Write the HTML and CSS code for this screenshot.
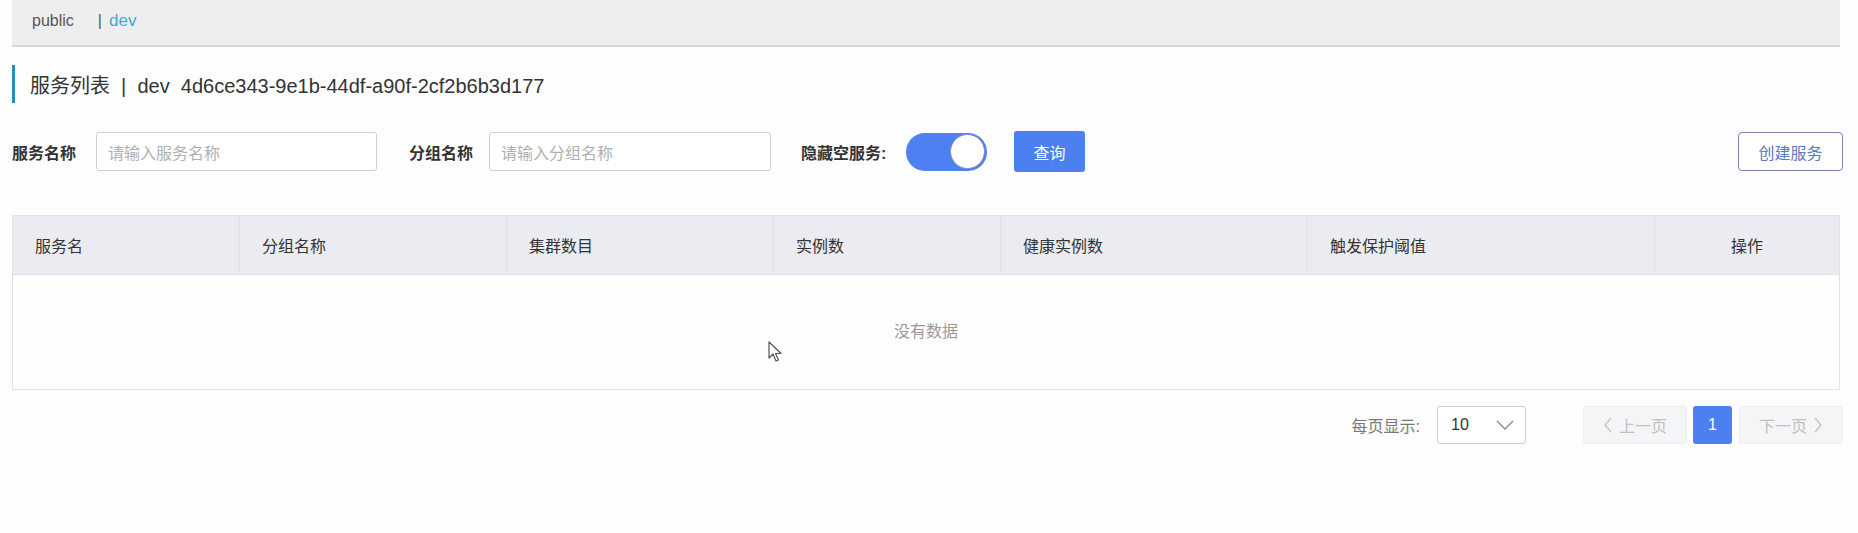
FILE: index.html
```html
<!DOCTYPE html>
<html lang="zh-CN">
<head>
<meta charset="utf-8">
<title>服务列表</title>
<link rel="stylesheet" href="styles.css">
</head>
<body>
<div class="page">
  <div class="ns-bar">
    <span class="ns">public</span>
    <span class="ns-sep">|</span>
    <span class="ns ns-active">dev</span>
  </div>

  <div class="title">服务列表 &nbsp;|&nbsp; dev&nbsp; 4d6ce343-9e1b-44df-a90f-2cf2b6b3d177</div>

  <div class="filters">
    <label class="flabel">服务名称</label>
    <div class="input input-1">请输入服务名称</div>
    <label class="flabel flabel-2">分组名称</label>
    <div class="input input-2">请输入分组名称</div>
    <label class="flabel flabel-3">隐藏空服务:</label>
    <div class="toggle"><span class="knob"></span></div>
    <button class="btn-primary">查询</button>
    <button class="btn-outline">创建服务</button>
  </div>

  <div class="table">
    <div class="thead">
      <div class="th c1">服务名</div>
      <div class="th c2">分组名称</div>
      <div class="th c3">集群数目</div>
      <div class="th c4">实例数</div>
      <div class="th c5">健康实例数</div>
      <div class="th c6">触发保护阈值</div>
      <div class="th c7 center">操作</div>
    </div>
    <div class="tbody">没有数据</div>
  </div>

  <div class="pager">
    <span class="pager-label">每页显示:</span>
    <div class="select">
      <span>10</span>
      <svg class="chev" width="18" height="10" viewBox="0 0 18 10"><path d="M1 1 L9 9 L17 1" fill="none" stroke="#8a8a8a" stroke-width="1.4"/></svg>
    </div>
    <div class="pbtn prev"><svg width="10" height="16" viewBox="0 0 10 16"><path d="M8 1 L2 8 L8 15" fill="none" stroke="#c4c4c4" stroke-width="1.4"/></svg>上一页</div>
    <div class="pbtn cur">1</div>
    <div class="pbtn next">下一页<svg width="10" height="16" viewBox="0 0 10 16"><path d="M2 1 L8 8 L2 15" fill="none" stroke="#c4c4c4" stroke-width="1.4"/></svg></div>
  </div>

  <svg class="cursor" width="16" height="22" viewBox="0 0 16 22"><path d="M1 1 L1 17 L5 13 L8 20 L10.5 19 L7.5 12.5 L13 12.5 Z" fill="#fff" stroke="#555" stroke-width="1.2" stroke-linejoin="round"/></svg>
</div>
</body>
</html>
```

FILE: styles.css
```css
* { box-sizing: border-box; }
html, body { margin: 0; padding: 0; }
body {
  background: #fdfdfd;
  font-family: "Liberation Sans", "Noto Sans CJK SC", sans-serif;
  color: #333;
  width: 1858px;
  height: 533px;
  overflow: hidden;
}
.page {
  position: relative;
  padding: 0 18px 0 12px;
}
.ns-bar {
  height: 47px;
  background: #eeeeee;
  border-bottom: 2px solid #d6d6d6;
  display: flex;
  align-items: center;
  padding: 0 0 3px 20px;
  font-size: 16px;
}
.ns { color: #555; }
.ns-sep { color: #555; margin: 0 7px 0 24px; }
.ns-active { color: #3fa9d6; font-size: 17px; }

.title {
  margin-top: 18px;
  height: 38px;
  border-left: 3px solid #2a8fbd;
  padding-left: 15px;
  display: flex;
  align-items: center;
  font-size: 20px;
  color: #333;
  white-space: pre;
}

.filters {
  margin-top: 28px;
  height: 41px;
  display: flex;
  align-items: center;
}
.flabel {
  font-size: 16px;
  font-weight: bold;
  color: #333;
  width: 84px;
}
.flabel-2 { margin-left: 32px; width: 80px; }
.flabel-3 { margin-left: 30px; width: 105px; }
.input {
  height: 39px;
  border: 1px solid #d0d0d0;
  border-radius: 3px;
  background: #fff;
  font-size: 16px;
  color: #b0b0b0;
  display: flex;
  align-items: center;
  padding-left: 11px;
}
.input-1 { width: 281px; }
.input-2 { width: 282px; }
.toggle {
  width: 81px;
  height: 38px;
  border-radius: 19px;
  background: #4f80f1;
  position: relative;
  display: flex;
  align-items: center;
  justify-content: flex-end;
  padding-right: 2px;
}
.knob {
  width: 35px;
  height: 35px;
  border-radius: 50%;
  background: #fff;
  border: 1px solid #7d8fc4;
}
.btn-primary {
  margin-left: 27px;
  width: 71px;
  height: 41px;
  border: none;
  border-radius: 3px;
  background: #4c80f1;
  color: #fff;
  font-family: inherit;
  font-size: 16px;
}
.btn-outline {
  margin-left: auto;
  margin-right: -3px;
  width: 105px;
  height: 39px;
  border: 1px solid #7b88a3;
  border-radius: 4px;
  background: #fff;
  color: #5a78c4;
  font-family: inherit;
  font-size: 16px;
}

.table {
  margin-top: 43px;
  border: 1px solid #e1e2e6;
  background: #fefefe;
}
.thead {
  display: grid;
  grid-template-columns: 226px 267px 267px 227px 307px 347px 1fr;
  height: 59px;
  background: #ebecf1;
  border-bottom: 1px solid #e0e1e6;
}
.th {
  display: flex;
  align-items: center;
  padding-left: 22px;
  font-size: 16px;
  color: #333;
  border-left: 1px solid #e0e1e6;
}
.th.c1 { border-left: none; }
.th.center { justify-content: center; padding-left: 0; }
.tbody {
  height: 114px;
  display: flex;
  align-items: center;
  justify-content: center;
  padding-bottom: 4px;
  font-size: 16px;
  color: #999;
}

.pager {
  margin-top: 16px;
  height: 38px;
  display: flex;
  align-items: center;
  justify-content: flex-end;
  margin-right: -3px;
  font-size: 16px;
}
.pager-label { color: #777; margin-right: 17px; }
.select {
  width: 89px;
  height: 38px;
  border: 1px solid #cfcfcf;
  border-radius: 3px;
  background: #fff;
  display: flex;
  align-items: center;
  justify-content: space-between;
  padding: 0 11px 0 13px;
  color: #333;
}
.pbtn {
  height: 38px;
  border-radius: 3px;
  display: flex;
  align-items: center;
  justify-content: center;
  gap: 6px;
}
.prev, .next {
  width: 104px;
  background: #f4f5f7;
  border: 1px solid #eceef1;
  color: #c0c0c0;
}
.prev { margin-left: 57px; }
.cur {
  width: 39px;
  margin: 0 7px 0 6px;
  background: #4c80f1;
  color: #fff;
}
.cursor {
  position: absolute;
  left: 768px;
  top: 341px;
}
```
